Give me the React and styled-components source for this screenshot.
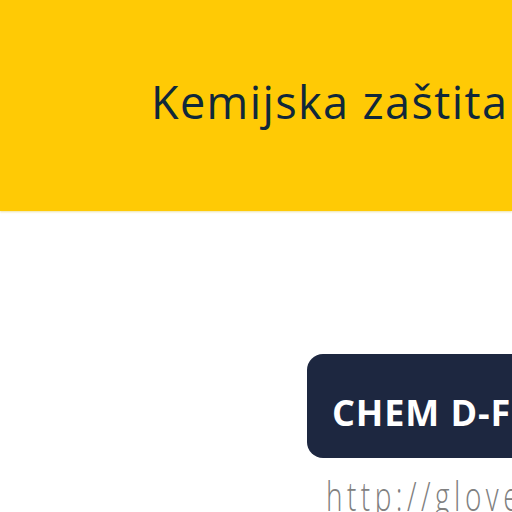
import React from "react";
import styled, { createGlobalStyle } from "styled-components";

const GlobalStyle = createGlobalStyle`
  html, body {
    margin: 0;
    padding: 0;
    background: #ffffff;
    overflow: hidden;
  }
  body {
    width: 512px;
    height: 512px;
    font-family: "Open Sans", "Liberation Sans", sans-serif;
  }
`;

const Page = styled.div`
  width: 512px;
  height: 512px;
  overflow: hidden;
  display: flex;
  flex-direction: column;
`;

const Header = styled.header`
  height: 211px;
  background: #ffca05;
  box-shadow: 0 1px 2px rgba(200, 170, 0, 0.35);
  display: flex;
  align-items: flex-start;
  padding-left: 151px;
  box-sizing: border-box;
  flex-shrink: 0;
`;

const Title = styled.h1`
  margin: 0;
  padding-top: 74px;
  font-family: "Open Sans", sans-serif;
  font-weight: 400;
  font-size: 45px;
  letter-spacing: 1.4px;
  line-height: 56px;
  color: #10283a;
  white-space: nowrap;
`;

const Content = styled.main`
  display: flex;
  flex-direction: column;
  align-items: flex-start;
  padding: 143px 0 0 307px;
`;

const ProductBadge = styled.div`
  display: flex;
  align-items: center;
  height: 104px;
  width: 260px;
  box-sizing: border-box;
  padding: 12px 0 0 25px;
  background: #1d2740;
  border-radius: 16px;
  color: #ffffff;
  font-family: "Open Sans", sans-serif;
  font-weight: 700;
  font-size: 36px;
  letter-spacing: 0.9px;
  white-space: nowrap;
`;

const Link = styled.div`
  margin: 14px 0 0 19px;
  font-family: "Open Sans", sans-serif;
  font-weight: 300;
  font-size: 40px;
  line-height: 48px;
  letter-spacing: 6.4px;
  color: #808080;
  white-space: nowrap;
  transform: scaleX(0.7);
  transform-origin: left center;
`;

export default function App() {
  return (
    <>
      <GlobalStyle />
      <Page>
        <Header>
          <Title>Kemijska zaštita</Title>
        </Header>
        <Content>
          <ProductBadge>CHEM D-FENCE</ProductBadge>
          <Link>http://gloves.example</Link>
        </Content>
      </Page>
    </>
  );
}
